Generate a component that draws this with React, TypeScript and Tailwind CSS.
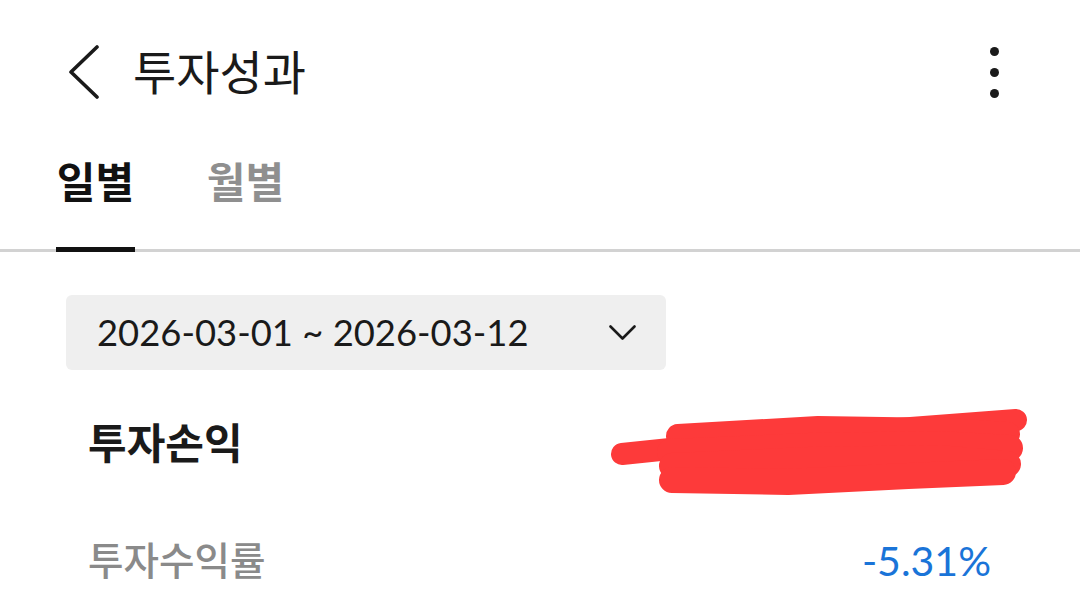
import React, { useState } from "react";

const font = { fontFamily: "Lato, 'Noto Sans CJK KR', sans-serif" };

const Scribble = () => (
  <svg width="424" height="88" viewBox="0 0 424 88" fill="none">
    <g stroke="#fd3a3a" strokeLinecap="round" strokeLinejoin="round">
      <path d="M14 46 L110 36 L250 24 L408 12" strokeWidth="22" />
      <path d="M70 28 L210 20 L340 22 L400 26" strokeWidth="24" />
      <path d="M62 44 L200 38 L330 36 L402 40" strokeWidth="26" />
      <path d="M64 58 L200 52 L330 50 L400 56" strokeWidth="26" />
      <path d="M64 72 L180 74 L300 68 L395 64" strokeWidth="26" />
    </g>
  </svg>
);

export default function App() {
  const [tab, setTab] = useState("daily");

  const tabClass = (key: string) =>
    `h-[108px] w-[79px] pt-[17px] flex justify-center items-start text-[42px] leading-none font-bold -mb-[3px] border-b-[5px] ${
      tab === key ? "border-[#111] text-[#111]" : "border-transparent text-[#8f8f8f]"
    }`;

  return (
    <div className="w-[1080px] h-[599px] bg-white overflow-hidden text-[#1a1a1a]" style={font}>
      <div className="h-[144px] flex items-center pl-[68px] pr-[81px]">
        <svg width="32" height="54" viewBox="0 0 32 54" fill="none">
          <polyline points="29,2 3,27 29,52" stroke="#1a1a1a" strokeWidth="3.6" strokeLinecap="round" strokeLinejoin="round" />
        </svg>
        <h1 className="ml-[33px] text-[47px] leading-none">투자성과</h1>
        <div className="ml-auto flex flex-col items-center gap-[12px]">
          <span className="w-[9px] h-[9px] rounded-full bg-[#1a1a1a]" />
          <span className="w-[9px] h-[9px] rounded-full bg-[#1a1a1a]" />
          <span className="w-[9px] h-[9px] rounded-full bg-[#1a1a1a]" />
        </div>
      </div>

      <div className="flex border-b-[3px] border-[#d2d2d2] pl-[56px] gap-[71px]">
        <button onClick={() => setTab("daily")} className={tabClass("daily")}>
          일별
        </button>
        <button onClick={() => setTab("monthly")} className={tabClass("monthly")}>
          월별
        </button>
      </div>

      <div className="pl-[66px] pt-[43px]">
        <div className="w-[600px] h-[75px] bg-[#efefef] rounded-[6px] flex items-center pl-[31px] pr-[30px]">
          <span className="text-[36.4px]">2026-03-01 ~ 2026-03-12</span>
          <svg className="ml-auto" width="27" height="16" viewBox="0 0 27 16" fill="none">
            <polyline points="1.5,1.5 13.5,13.5 25.5,1.5" stroke="#1a1a1a" strokeWidth="2.6" strokeLinecap="round" strokeLinejoin="round" />
          </svg>
        </div>
      </div>

      <div className="flex items-start pl-[88px] pr-[48px] mt-[38px]">
        <span className="pt-[14px] text-[42px] leading-none font-bold">투자손익</span>
        <div className="ml-auto">
          <Scribble />
        </div>
      </div>

      <div className="flex items-center pl-[88px] pr-[89px] mt-[44px]">
        <span className="text-[38.6px] leading-none font-medium text-[#8a8a8a]">투자수익률</span>
        <span className="ml-auto text-[41px] leading-none text-[#1a74d8]">-5.31%</span>
      </div>
    </div>
  );
}
